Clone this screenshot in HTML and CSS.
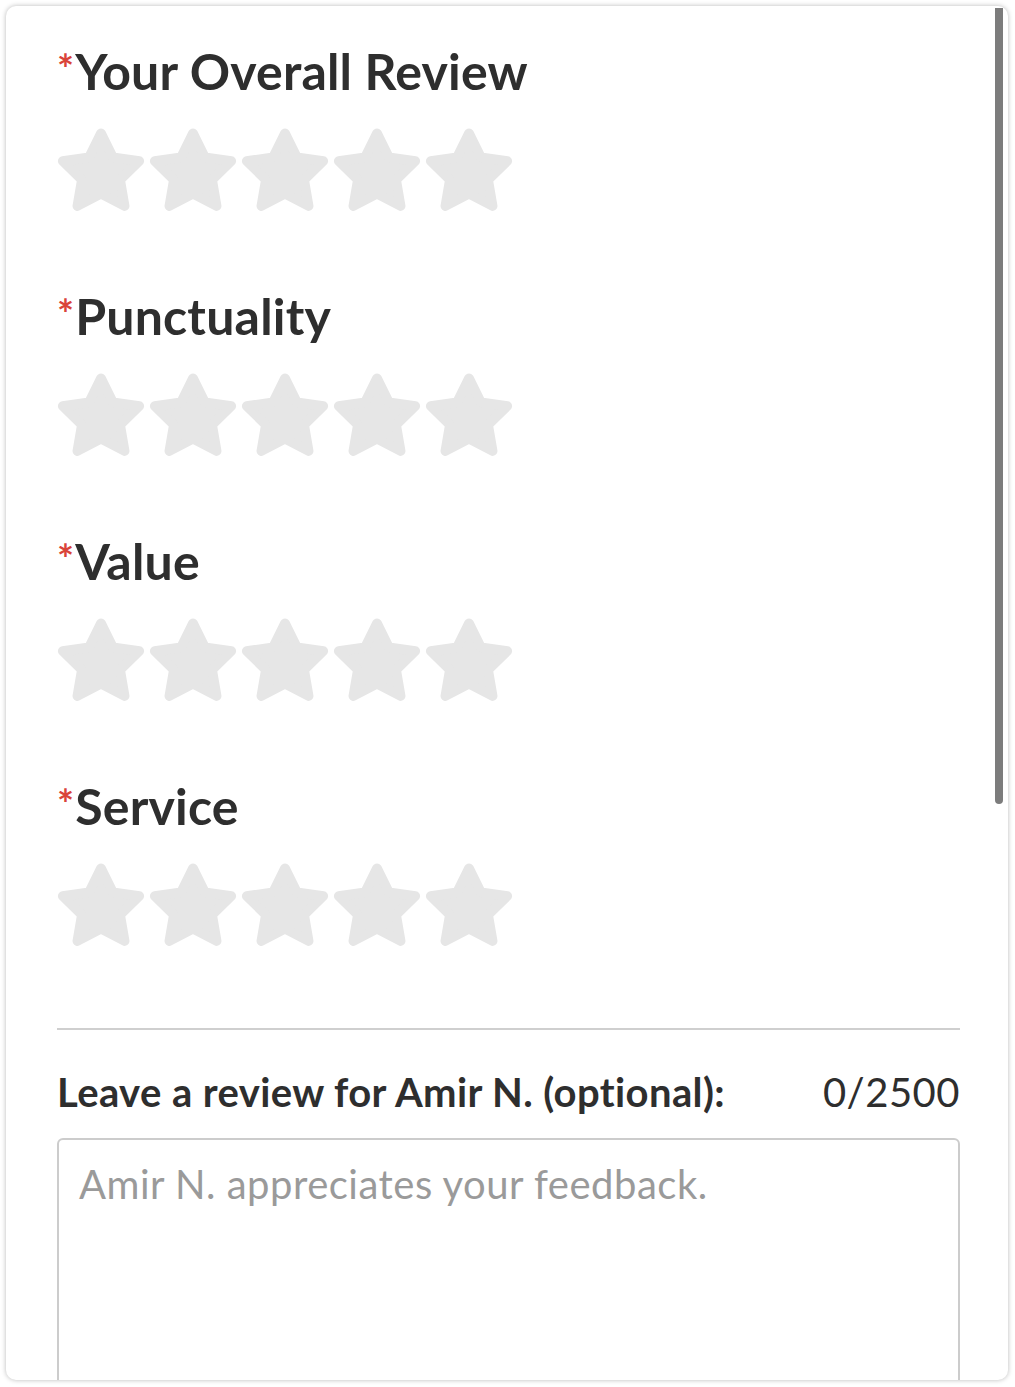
FILE: index.html
```html
<!DOCTYPE html>
<html lang="en">
<head>
<meta charset="utf-8">
<title>Review</title>
<link rel="stylesheet" href="styles.css">
</head>
<body>
<div class="card">
  <div class="content">
    <section class="rating">
      <h2 class="label"><span class="req">*</span>Your Overall Review</h2>
      <div class="stars">
        <svg class="star" viewBox="0 0 100 96"><polygon points="50,6 63.52,33.39 93.75,37.79 71.87,59.11 77.04,89.21 50,75 22.96,89.21 28.13,59.11 6.25,37.79 36.48,33.39"/></svg>
        <svg class="star" viewBox="0 0 100 96"><polygon points="50,6 63.52,33.39 93.75,37.79 71.87,59.11 77.04,89.21 50,75 22.96,89.21 28.13,59.11 6.25,37.79 36.48,33.39"/></svg>
        <svg class="star" viewBox="0 0 100 96"><polygon points="50,6 63.52,33.39 93.75,37.79 71.87,59.11 77.04,89.21 50,75 22.96,89.21 28.13,59.11 6.25,37.79 36.48,33.39"/></svg>
        <svg class="star" viewBox="0 0 100 96"><polygon points="50,6 63.52,33.39 93.75,37.79 71.87,59.11 77.04,89.21 50,75 22.96,89.21 28.13,59.11 6.25,37.79 36.48,33.39"/></svg>
        <svg class="star" viewBox="0 0 100 96"><polygon points="50,6 63.52,33.39 93.75,37.79 71.87,59.11 77.04,89.21 50,75 22.96,89.21 28.13,59.11 6.25,37.79 36.48,33.39"/></svg>
      </div>
    </section>
    <section class="rating">
      <h2 class="label"><span class="req">*</span>Punctuality</h2>
      <div class="stars">
        <svg class="star" viewBox="0 0 100 96"><polygon points="50,6 63.52,33.39 93.75,37.79 71.87,59.11 77.04,89.21 50,75 22.96,89.21 28.13,59.11 6.25,37.79 36.48,33.39"/></svg>
        <svg class="star" viewBox="0 0 100 96"><polygon points="50,6 63.52,33.39 93.75,37.79 71.87,59.11 77.04,89.21 50,75 22.96,89.21 28.13,59.11 6.25,37.79 36.48,33.39"/></svg>
        <svg class="star" viewBox="0 0 100 96"><polygon points="50,6 63.52,33.39 93.75,37.79 71.87,59.11 77.04,89.21 50,75 22.96,89.21 28.13,59.11 6.25,37.79 36.48,33.39"/></svg>
        <svg class="star" viewBox="0 0 100 96"><polygon points="50,6 63.52,33.39 93.75,37.79 71.87,59.11 77.04,89.21 50,75 22.96,89.21 28.13,59.11 6.25,37.79 36.48,33.39"/></svg>
        <svg class="star" viewBox="0 0 100 96"><polygon points="50,6 63.52,33.39 93.75,37.79 71.87,59.11 77.04,89.21 50,75 22.96,89.21 28.13,59.11 6.25,37.79 36.48,33.39"/></svg>
      </div>
    </section>
    <section class="rating">
      <h2 class="label"><span class="req">*</span>Value</h2>
      <div class="stars">
        <svg class="star" viewBox="0 0 100 96"><polygon points="50,6 63.52,33.39 93.75,37.79 71.87,59.11 77.04,89.21 50,75 22.96,89.21 28.13,59.11 6.25,37.79 36.48,33.39"/></svg>
        <svg class="star" viewBox="0 0 100 96"><polygon points="50,6 63.52,33.39 93.75,37.79 71.87,59.11 77.04,89.21 50,75 22.96,89.21 28.13,59.11 6.25,37.79 36.48,33.39"/></svg>
        <svg class="star" viewBox="0 0 100 96"><polygon points="50,6 63.52,33.39 93.75,37.79 71.87,59.11 77.04,89.21 50,75 22.96,89.21 28.13,59.11 6.25,37.79 36.48,33.39"/></svg>
        <svg class="star" viewBox="0 0 100 96"><polygon points="50,6 63.52,33.39 93.75,37.79 71.87,59.11 77.04,89.21 50,75 22.96,89.21 28.13,59.11 6.25,37.79 36.48,33.39"/></svg>
        <svg class="star" viewBox="0 0 100 96"><polygon points="50,6 63.52,33.39 93.75,37.79 71.87,59.11 77.04,89.21 50,75 22.96,89.21 28.13,59.11 6.25,37.79 36.48,33.39"/></svg>
      </div>
    </section>
    <section class="rating">
      <h2 class="label"><span class="req">*</span>Service</h2>
      <div class="stars">
        <svg class="star" viewBox="0 0 100 96"><polygon points="50,6 63.52,33.39 93.75,37.79 71.87,59.11 77.04,89.21 50,75 22.96,89.21 28.13,59.11 6.25,37.79 36.48,33.39"/></svg>
        <svg class="star" viewBox="0 0 100 96"><polygon points="50,6 63.52,33.39 93.75,37.79 71.87,59.11 77.04,89.21 50,75 22.96,89.21 28.13,59.11 6.25,37.79 36.48,33.39"/></svg>
        <svg class="star" viewBox="0 0 100 96"><polygon points="50,6 63.52,33.39 93.75,37.79 71.87,59.11 77.04,89.21 50,75 22.96,89.21 28.13,59.11 6.25,37.79 36.48,33.39"/></svg>
        <svg class="star" viewBox="0 0 100 96"><polygon points="50,6 63.52,33.39 93.75,37.79 71.87,59.11 77.04,89.21 50,75 22.96,89.21 28.13,59.11 6.25,37.79 36.48,33.39"/></svg>
        <svg class="star" viewBox="0 0 100 96"><polygon points="50,6 63.52,33.39 93.75,37.79 71.87,59.11 77.04,89.21 50,75 22.96,89.21 28.13,59.11 6.25,37.79 36.48,33.39"/></svg>
      </div>
    </section>
    <hr class="divider">
    <div class="review-head">
      <span class="review-label">Leave a review for Amir N. (optional):</span>
      <span class="count">0/2500</span>
    </div>
    <textarea class="review-box" placeholder="Amir N. appreciates your feedback."></textarea>
  </div>
  <div class="scrollbar"></div>
</div>
</body>
</html>
```

FILE: styles.css
```css
html, body {
  margin: 0;
  padding: 0;
  background: #ffffff;
}

body {
  padding: 6px 7px 7px 6px;
  font-family: Lato, "Open Sans", "Liberation Sans", sans-serif;
  color: #2e2e2e;
}

.card {
  position: relative;
  height: 1374px;
  background: #ffffff;
  border-radius: 10px;
  box-shadow: 0 0 5px rgba(0, 0, 0, 0.28);
  overflow: hidden;
}

.content {
  padding: 35px 48px 0 51px;
}

.rating {
  margin-bottom: 74px;
}

.rating:last-of-type {
  margin-bottom: 81px;
}

.label {
  margin: 0;
  font-size: 50px;
  line-height: 60px;
  font-weight: 700;
  color: #2e2e2e;
  letter-spacing: 0.2px;
}

.req {
  color: #d9443a;
  font-weight: 700;
  font-size: 40px;
  line-height: 0;
  vertical-align: 6px;
  margin-right: 1px;
}

.stars {
  display: flex;
  gap: 4px;
  margin-top: 27px;
  height: 84px;
}

.star {
  width: 88px;
  height: 84px;
  display: block;
}

.star polygon {
  fill: #e6e6e6;
  stroke: #e6e6e6;
  stroke-width: 11;
  stroke-linejoin: round;
}

.divider {
  margin: 0;
  border: 0;
  height: 2px;
  background: #cfcfcf;
}

.review-head {
  display: flex;
  justify-content: space-between;
  align-items: baseline;
  margin-top: 38px;
  font-size: 40px;
  line-height: 48px;
}

.review-label {
  font-weight: 700;
  letter-spacing: 0.4px;
}

.count {
  font-weight: 400;
  letter-spacing: 0.5px;
}

.review-box {
  display: block;
  box-sizing: border-box;
  width: 100%;
  height: 300px;
  margin: 22px 0 0;
  padding: 20px 20px;
  border: 2px solid #cccccc;
  border-radius: 6px;
  resize: none;
  font-family: Lato, "Open Sans", "Liberation Sans", sans-serif;
  font-size: 40px;
  line-height: 48px;
  letter-spacing: 0.5px;
  color: #333333;
  outline: none;
}

.review-box::placeholder {
  color: #9a9a9a;
  opacity: 1;
}

.scrollbar {
  position: absolute;
  top: 2px;
  right: 5px;
  width: 8px;
  height: 796px;
  background: #7c7c7c;
  border-radius: 0 0 4px 4px;
}
```
